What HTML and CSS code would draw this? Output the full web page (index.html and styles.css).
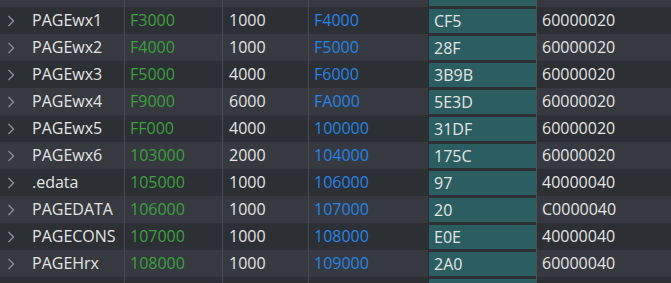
FILE: index.html
```html
<!DOCTYPE html>
<html>
<head>
<meta charset="utf-8">
<link rel="stylesheet" href="styles.css">
</head>
<body>
<div class="table">
  <div class="row light"><div class="c name"><svg class="chev" viewBox="0 0 8 12"><polyline points="1.5,1 6.5,6 1.5,11"/></svg>PAGE</div><div class="c g">E2000</div><div class="c w">1000</div><div class="c b">E3000</div><div class="c t"><span class="tb">D1A5</span></div><div class="c w last">60000020</div></div>
  <div class="row dark"><div class="c name"><svg class="chev" viewBox="0 0 8 12"><polyline points="1.5,1 6.5,6 1.5,11"/></svg>PAGEwx1</div><div class="c g">F3000</div><div class="c w">1000</div><div class="c b">F4000</div><div class="c t"><span class="tb">CF5</span></div><div class="c w last">60000020</div></div>
  <div class="row light"><div class="c name"><svg class="chev" viewBox="0 0 8 12"><polyline points="1.5,1 6.5,6 1.5,11"/></svg>PAGEwx2</div><div class="c g">F4000</div><div class="c w">1000</div><div class="c b">F5000</div><div class="c t"><span class="tb">28F</span></div><div class="c w last">60000020</div></div>
  <div class="row dark"><div class="c name"><svg class="chev" viewBox="0 0 8 12"><polyline points="1.5,1 6.5,6 1.5,11"/></svg>PAGEwx3</div><div class="c g">F5000</div><div class="c w">4000</div><div class="c b">F6000</div><div class="c t"><span class="tb">3B9B</span></div><div class="c w last">60000020</div></div>
  <div class="row light"><div class="c name"><svg class="chev" viewBox="0 0 8 12"><polyline points="1.5,1 6.5,6 1.5,11"/></svg>PAGEwx4</div><div class="c g">F9000</div><div class="c w">6000</div><div class="c b">FA000</div><div class="c t"><span class="tb">5E3D</span></div><div class="c w last">60000020</div></div>
  <div class="row dark"><div class="c name"><svg class="chev" viewBox="0 0 8 12"><polyline points="1.5,1 6.5,6 1.5,11"/></svg>PAGEwx5</div><div class="c g">FF000</div><div class="c w">4000</div><div class="c b">100000</div><div class="c t"><span class="tb">31DF</span></div><div class="c w last">60000020</div></div>
  <div class="row light"><div class="c name"><svg class="chev" viewBox="0 0 8 12"><polyline points="1.5,1 6.5,6 1.5,11"/></svg>PAGEwx6</div><div class="c g">103000</div><div class="c w">2000</div><div class="c b">104000</div><div class="c t"><span class="tb">175C</span></div><div class="c w last">60000020</div></div>
  <div class="row dark"><div class="c name"><svg class="chev" viewBox="0 0 8 12"><polyline points="1.5,1 6.5,6 1.5,11"/></svg>.edata</div><div class="c g">105000</div><div class="c w">1000</div><div class="c b">106000</div><div class="c t"><span class="tb">97</span></div><div class="c w last">40000040</div></div>
  <div class="row light"><div class="c name"><svg class="chev" viewBox="0 0 8 12"><polyline points="1.5,1 6.5,6 1.5,11"/></svg>PAGEDATA</div><div class="c g">106000</div><div class="c w">1000</div><div class="c b">107000</div><div class="c t"><span class="tb">20</span></div><div class="c w last">C0000040</div></div>
  <div class="row dark"><div class="c name"><svg class="chev" viewBox="0 0 8 12"><polyline points="1.5,1 6.5,6 1.5,11"/></svg>PAGECONS</div><div class="c g">107000</div><div class="c w">1000</div><div class="c b">108000</div><div class="c t"><span class="tb">E0E</span></div><div class="c w last">40000040</div></div>
  <div class="row light"><div class="c name"><svg class="chev" viewBox="0 0 8 12"><polyline points="1.5,1 6.5,6 1.5,11"/></svg>PAGEHrx</div><div class="c g">108000</div><div class="c w">1000</div><div class="c b">109000</div><div class="c t"><span class="tb">2A0</span></div><div class="c w last">60000040</div></div>
  <div class="row dark"><div class="c name"></div><div class="c g"></div><div class="c w"></div><div class="c b"></div><div class="c t"><span class="tb"></span></div><div class="c w last"></div></div>
</div>
</body>
</html>
```
FILE: styles.css
```css
html, body {
  margin: 0;
  padding: 0;
  background: #2c2f34;
  overflow: hidden;
}
body {
  width: 671px;
  height: 283px;
  font-family: "Open Sans", "Noto Sans", sans-serif;
  font-size: 16px;
  color: #e4e4e4;
}
.table {
  margin-top: -20px;
  display: flex;
  flex-direction: column;
}
.row {
  display: grid;
  grid-template-columns: 124px 98px 86px 120px 108px 1fr;
  height: 27px;
}
.row.dark { background: #2c2f34; }
.row.light { background: #363940; }
.c {
  display: flex;
  align-items: center;
  border-left: 1px solid #46494f;
  padding-left: 5px;
  white-space: nowrap;
  overflow: hidden;
  line-height: 27px;
}
.c.w { padding-left: 6px; }
.c.last { padding-left: 5px; border-left-color: #4c4f55; }
.name {
  border-left: none;
  padding-left: 7px;
}
.chev {
  width: 8px;
  height: 12px;
  margin-right: 17px;
  flex: none;
  fill: none;
  stroke: #8b8e94;
  stroke-width: 1.4;
}
.g { color: #3ca03c; }
.b { color: #2584e6; }
.t {
  background: #2c2f34;
  padding: 2px 0 1px 0;
  align-items: stretch;
  border-left-color: #2a2c30;
}
.tb {
  flex: 1;
  background: #2b5e60;
  padding-left: 5px;
  line-height: 24px;
  display: flex;
  align-items: center;
}
```
